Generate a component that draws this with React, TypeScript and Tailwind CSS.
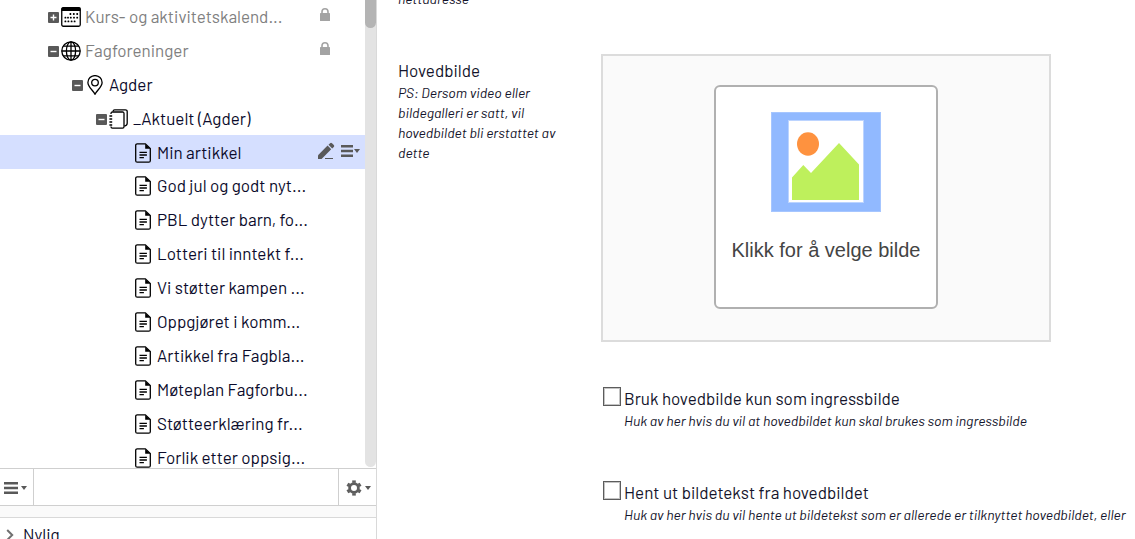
import React, { useState } from 'react';

interface IconProps {
    className?: string;
}

interface TreeNode {
    id: string;
    label: string;
    icon: 'calendar' | 'globe' | 'pin' | 'notebook' | 'document';
    locked?: boolean;
    open?: boolean;
    children?: TreeNode[];
}

const articles = [
    'Min artikkel',
    'God jul og godt nyt...',
    'PBL dytter barn, fo...',
    'Lotteri til inntekt f...',
    'Vi støtter kampen ...',
    'Oppgjøret i komm...',
    'Artikkel fra Fagbla...',
    'Møteplan Fagforbu...',
    'Støtteerklæring fr...',
    'Forlik etter oppsig...',
];

const tree: TreeNode[] = [
    { id: 'kurs', label: 'Kurs- og aktivitetskalend...', icon: 'calendar', locked: true, children: [] },
    {
        id: 'fag',
        label: 'Fagforeninger',
        icon: 'globe',
        locked: true,
        open: true,
        children: [
            {
                id: 'agder',
                label: 'Agder',
                icon: 'pin',
                open: true,
                children: [
                    {
                        id: 'aktuelt',
                        label: '_Aktuelt (Agder)',
                        icon: 'notebook',
                        open: true,
                        children: articles.map((label, i) => ({ id: `artikkel-${i}`, label, icon: 'document' as const })),
                    },
                ],
            },
        ],
    },
];

const levelPadding = ['pl-[48px]', 'pl-[72px]', 'pl-[96px]', 'pl-[120px]'];

const CalendarIcon = () => (
    <svg viewBox="0 0 20 20" className="w-5 h-5" fill="none">
        <rect x="0.75" y="0.75" width="18.5" height="18.5" rx="1.5" stroke="#000" strokeWidth="1.3" />
        <path d="M0.5 1.5a1 1 0 0 1 1-1h17a1 1 0 0 1 1 1V4H.5z" fill="#000" />
        <g fill="#000">
            {[[9.4, 7], [12.8, 7], [16.2, 7], [4.4, 10.7], [7, 10.7], [9.8, 10.7], [13, 10.7], [16.2, 10.7], [4.4, 14.4], [7.4, 14.4], [10.6, 14.4], [13.6, 14.4]].map(([x, y]) => (
                <rect key={`${x}-${y}`} x={x - 0.9} y={y - 0.9} width="1.8" height="1.8" rx="0.6" />
            ))}
        </g>
    </svg>
);

const GlobeIcon = () => (
    <svg viewBox="0 0 20 20" className="w-5 h-5" fill="none" stroke="#000" strokeWidth="1.3">
        <circle cx="10" cy="10" r="9.2" />
        <ellipse cx="10" cy="10" rx="4.6" ry="9.2" />
        <path d="M10 .8v18.4M.8 10h18.4M2.4 5.2h15.2M2.4 14.8h15.2" />
    </svg>
);

const PinIcon = () => (
    <svg viewBox="0 0 20 20" className="w-5 h-5" fill="none" stroke="#000" strokeWidth="1.3">
        <path d="M10 19.2C8.2 15.4 2.9 12 2.9 7.4a7.1 6.8 0 0 1 14.2 0C17.1 12 11.8 15.4 10 19.2z" />
        <circle cx="10" cy="7.6" r="3.3" />
    </svg>
);

const NotebookIcon = () => (
    <svg viewBox="0 0 20 20" className="w-5 h-5" fill="none" stroke="#000" strokeWidth="1.3">
        <path d="M2 5V4.4A1.4 1.4 0 0 1 3.4 3h10.2A1.4 1.4 0 0 1 15 4.4v13.4a1.4 1.4 0 0 1-1.4 1.4H3.4A1.4 1.4 0 0 1 2 17.8v-.4" />
        <path d="M4 2.4C4.2 1.3 4.6.8 5.6.8h10.8A1.8 1.8 0 0 1 18.2 2.6v11.6c0 1.4-.8 2.4-2.8 2.8" />
        <path d="M.4 7h2.8M.4 10h2.8M.4 13h2.8M.4 16h2.8" strokeWidth="1.5" />
    </svg>
);

const DocumentIcon = () => (
    <svg viewBox="0 0 20 20" className="w-5 h-5" fill="none" stroke="#000" strokeWidth="1.3">
        <path d="M12.4.8H4.2a1.5 1.5 0 0 0-1.5 1.5v15.4a1.5 1.5 0 0 0 1.5 1.5h11.6a1.5 1.5 0 0 0 1.5-1.5V5.6z" />
        <path d="M12.2 1v4.8h5z" fill="#000" stroke="none" />
        <path d="M6.5 9.4h7.4M6.5 12h7.4M6.5 14.6h4.4" />
    </svg>
);

const nodeIcons = {
    calendar: CalendarIcon,
    globe: GlobeIcon,
    pin: PinIcon,
    notebook: NotebookIcon,
    document: DocumentIcon,
};

const LockIcon = () => (
    <svg viewBox="0 0 10 13" className="w-[10px] h-[13px] mb-[6px]" role="img" aria-label="Låst">
        <path d="M2 6V3.8a3 3 0 0 1 6 0V6" fill="none" stroke="#a3a3a3" strokeWidth="1.6" />
        <rect y="5" width="10" height="8" rx="0.6" fill="#a3a3a3" />
    </svg>
);

const PencilIcon = () => (
    <svg viewBox="0 0 18 18" className="w-[18px] h-[18px]" fill="#595959">
        <path d="M1 17v-3.8L10.6 3.6l3.6 3.6L4.6 17z" />
        <path d="M11.5 2.8l1.6-1.6a1.3 1.3 0 0 1 1.9 0l1.8 1.8a1.3 1.3 0 0 1 0 1.9l-1.6 1.6z" />
        <path d="M8 16h8v1H8z" />
    </svg>
);

const MenuIcon = ({ className }: IconProps) => (
    <svg viewBox="0 0 14 14" preserveAspectRatio="none" className={className} fill="#595959">
        <path d="M0 1h14v2.4H0zM0 5.8h14v2.4H0zM0 10.6h14V13H0z" />
    </svg>
);

const CaretIcon = () => (
    <svg viewBox="0 0 6 4" className="w-[6px] h-[4px]">
        <path d="M0 0h6L3 4z" fill="#595959" />
    </svg>
);

const GearIcon = () => (
    <svg viewBox="0 0 16 16" className="w-4 h-4" fill="none" stroke="#5e5e5e">
        <circle cx="8" cy="8" r="4.4" strokeWidth="2.8" />
        {[0, 60, 120, 180, 240, 300].map(deg => (
            <path key={deg} d="M8 2.8V.4" strokeWidth="3.6" transform={`rotate(${deg} 8 8)`} />
        ))}
    </svg>
);

const PictureIcon = () => (
    <svg viewBox="0 0 110 100" className="w-[110px] h-[100px]">
        <rect x="0.5" y="0.5" width="109" height="99" fill="#91b9ff" stroke="#a6c6ff" />
        <rect x="17.5" y="8.5" width="75" height="82" fill="#fff" stroke="#bcd4ff" />
        <ellipse cx="37" cy="32" rx="11" ry="11.7" fill="#fe923f" />
        <path d="M21 65.5L32.3 53 40 61 68 31l20 21.5V88H21z" fill="#bef05c" />
    </svg>
);

interface TreeItemProps {
    node: TreeNode;
    level: number;
    selected: string;
    onSelect: (id: string) => void;
}

const TreeItem = ({ node, level, selected, onSelect }: TreeItemProps) => {
    const [isOpen, setIsOpen] = useState(!!node.open);
    const NodeIcon = nodeIcons[node.icon];
    const isSelected = selected === node.id;

    return (
        <li>
            <div
                className={`h-[34px] flex items-center gap-[2px] ${levelPadding[level]} ${node.children || isSelected ? 'pt-[2px]' : ''} ${isSelected ? 'bg-[#d5dfff]' : ''}`}
            >
                {node.children ? (
                    <button
                        type="button"
                        aria-label={isOpen ? 'Lukk' : 'Åpne'}
                        aria-expanded={isOpen}
                        onClick={() => setIsOpen(!isOpen)}
                        className="w-[11px] h-[11px] shrink-0 rounded-[1px] bg-[#595959]"
                    >
                        <svg viewBox="0 0 11 11" className="w-full h-full" stroke="#fff" strokeWidth="1.4">
                            <path d={isOpen ? 'M2.5 5.5h6' : 'M2.5 5.5h6M5.5 2.5v6'} />
                        </svg>
                    </button>
                ) : (
                    <span className="w-[11px] shrink-0" />
                )}
                <a
                    href={`#${node.id}`}
                    onClick={() => onSelect(node.id)}
                    className={`flex items-center gap-1 whitespace-nowrap ${node.locked ? 'text-[#808080]' : 'text-[#0b0b2b]'}`}
                >
                    <NodeIcon />
                    {node.label}
                </a>
                {node.locked && (
                    <span className="ml-auto pr-[35px]">
                        <LockIcon />
                    </span>
                )}
                {isSelected && (
                    <span className="ml-auto pr-[5px] pb-1 flex items-center gap-[6px]">
                        <button type="button" aria-label="Rediger">
                            <PencilIcon />
                        </button>
                        <button type="button" aria-label="Meny" className="flex items-center gap-px">
                            <MenuIcon className="w-[12px] h-[14px]" />
                            <CaretIcon />
                        </button>
                    </span>
                )}
            </div>
            {isOpen && node.children && node.children.length > 0 && (
                <ul>
                    {node.children.map(child => (
                        <TreeItem key={child.id} node={child} level={level + 1} selected={selected} onSelect={onSelect} />
                    ))}
                </ul>
            )}
        </li>
    );
};

const Sidebar = () => {
    const [selected, setSelected] = useState('artikkel-0');

    return (
        <aside className="w-[377px] shrink-0 flex flex-col border-r border-[#d9d9d9]">
            <div className="flex-1 min-h-0 flex">
                <nav className="flex-1 overflow-hidden" aria-label="Sidetre">
                    <ul className="-mt-px">
                        {tree.map(node => (
                            <TreeItem key={node.id} node={node} level={0} selected={selected} onSelect={setSelected} />
                        ))}
                    </ul>
                </nav>
                {/* Scrollbar */}
                <div className="w-[11px] mb-px rounded-b-full bg-[#e3e3e3]">
                    <div className="h-7 rounded-b-full bg-[#b4b4b4]" />
                </div>
            </div>

            {/* Toolbar */}
            <div className="h-[38px] flex justify-between border-y border-[#cfcfcf]">
                <button type="button" aria-label="Meny" className="w-[34px] pl-1 pt-px flex items-center gap-[3px] border-r border-[#cfcfcf]">
                    <MenuIcon className="w-[14px] h-[14px]" />
                    <CaretIcon />
                </button>
                <button type="button" aria-label="Innstillinger" className="w-[38px] pl-[7px] pt-[2px] flex items-center gap-[3px] border-l border-[#cfcfcf]">
                    <GearIcon />
                    <CaretIcon />
                </button>
            </div>
            <div className="h-[11px] bg-[#fafafa]" />
            <div className="h-[22px] overflow-hidden border-t border-[#d9d9d9]">
                <button type="button" className="h-[34px] pl-[6px] flex items-center gap-[9px] text-[#0b0b2b]">
                    <svg viewBox="0 0 8 12" className="w-2 h-3" fill="none" stroke="#707070" strokeWidth="2">
                        <path d="M1.2 1l5 5-5 5" />
                    </svg>
                    Nylig
                </button>
            </div>
        </aside>
    );
};

interface CheckFieldProps {
    id: string;
    label: string;
    help: string;
}

const CheckField = ({ id, label, help }: CheckFieldProps) => (
    <div className="flex items-start gap-[3px] pl-[2px]">
        <input
            id={id}
            type="checkbox"
            aria-describedby={`${id}-help`}
            className="appearance-none w-[18px] h-[19px] mt-px shrink-0 bg-white border border-[#5c5c5c] shadow-[inset_0_0_0_1px_#c4c4c4] checked:bg-[#5c5c5c]"
        />
        <div>
            <label htmlFor={id} className="block leading-6">{label}</label>
            <p id={`${id}-help`} className="mt-px text-[14px] leading-5 italic whitespace-nowrap">{help}</p>
        </div>
    </div>
);

const App = () => {
    return (
        <div className="h-screen flex overflow-hidden bg-white font-['Barlow','Roboto',sans-serif] text-[17px] text-[#14142b]">
            <Sidebar />
            <main className="flex-1 min-w-0 overflow-hidden pl-[21px]">
                <p className="-mt-[11px] text-[14px] leading-5 italic">nettadresse</p>
                <div className="mt-[45px] flex">
                    <div className="w-[203px] shrink-0 pt-1 pr-8">
                        <h2 className="leading-6">Hovedbilde</h2>
                        <p className="mt-px text-[14px] leading-5 italic">
                            PS: Dersom video eller bildegalleri er satt, vil hovedbildet bli erstattet av dette
                        </p>
                    </div>
                    <div className="flex-1 min-w-0">
                        <div className="max-w-[450px] pt-[29px] pb-[31px] flex justify-center bg-[#fafafa] border-2 border-[#dcdcdc]">
                            <button
                                type="button"
                                className="w-56 h-56 pt-[25px] flex flex-col items-center gap-[23px] bg-white border-2 border-[#b0b0b0] rounded-md font-['Liberation_Sans',sans-serif] text-[20px] text-[#444] whitespace-nowrap"
                            >
                                <PictureIcon />
                                Klikk for å velge bilde
                            </button>
                        </div>
                        <div className="mt-11 flex flex-col gap-[49px]">
                            <CheckField
                                id="ingressbilde"
                                label="Bruk hovedbilde kun som ingressbilde"
                                help="Huk av her hvis du vil at hovedbildet kun skal brukes som ingressbilde"
                            />
                            <CheckField
                                id="bildetekst"
                                label="Hent ut bildetekst fra hovedbildet"
                                help="Huk av her hvis du vil hente ut bildetekst som er allerede er tilknyttet hovedbildet, eller"
                            />
                        </div>
                    </div>
                </div>
            </main>
        </div>
    );
};

export default App;
